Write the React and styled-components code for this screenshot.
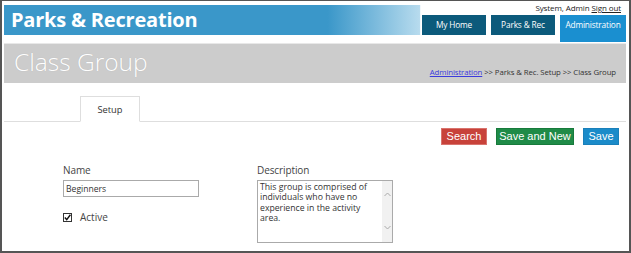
import React from "react";
import styled, { createGlobalStyle } from "styled-components";

const GlobalStyle = createGlobalStyle`
  html, body { margin: 0; padding: 0; background: #fff; }
  body { font-family: "Open Sans", "Noto Sans", sans-serif; color: #333; }
`;

const Frame = styled.div`
  box-sizing: border-box;
  width: 631px;
  height: 253px;
  border: 2px solid #555;
  border-top-width: 1px;
  padding: 4px 3px 0 2px;
  display: flex;
  flex-direction: column;
  overflow: hidden;
`;

const Header = styled.header`
  height: 30px;
  display: flex;
  justify-content: space-between;
  background: linear-gradient(
    to right,
    #3a97c9 0%,
    #3a97c9 52%,
    #b7dbee 66.8%,
    #fff 67%
  );
`;

const AppTitle = styled.h1`
  margin: 0;
  padding-left: 7px;
  font-size: 20px;
  font-weight: 700;
  line-height: 30px;
  color: #fff;
  letter-spacing: -0.2px;
`;

const UserArea = styled.div`
  display: flex;
  flex-direction: column;
  align-items: flex-end;
`;

const UserLine = styled.div`
  margin-top: -2px;
  padding-right: 5px;
  font-size: 8px;
  line-height: 10px;
  letter-spacing: -0.1px;
  color: #222;

  a {
    color: #222;
    text-decoration: underline;
  }
`;

const NavTabs = styled.nav`
  margin-top: 2px;
  display: flex;
  align-items: flex-start;
  gap: 5px;
`;

const NavTab = styled.a`
  display: flex;
  align-items: flex-start;
  justify-content: center;
  box-sizing: border-box;
  width: ${(p) => (p.$active ? "66px" : "64px")};
  height: ${(p) => (p.$active ? "27px" : "20px")};
  padding-top: 4px;
  font-size: 8.3px;
  line-height: 12px;
  letter-spacing: -0.15px;
  color: #fff;
  text-decoration: none;
  background: ${(p) => (p.$active ? "#1a8fd0" : "#0c5a7b")};
`;

const Banner = styled.div`
  margin-top: 8px;
  border-top: 1px solid #e8e8e8;
  height: 39px;
  background: #cccccc;
  display: flex;
  justify-content: space-between;
`;

const PageTitle = styled.h2`
  margin: 0;
  padding-left: 10px;
  font-size: 24.5px;
  font-weight: 300;
  line-height: 36px;
  color: #fff;
  text-shadow: 0 0 1px rgba(0, 0, 0, 0.15);
`;

const Breadcrumb = styled.div`
  align-self: flex-end;
  margin-bottom: 5px;
  padding-right: 10px;
  font-size: 7.8px;
  line-height: 11px;
  letter-spacing: -0.1px;
  color: #333;

  a {
    color: #3b3bdd;
    text-decoration: underline;
  }
`;

const TabBar = styled.div`
  margin-top: 13px;
  display: flex;
  border-bottom: 1px solid #dedede;
  padding-left: 76px;
`;

const Tab = styled.div`
  box-sizing: border-box;
  width: 60px;
  height: 26px;
  margin-bottom: -1px;
  border: 1px solid #dedede;
  border-bottom: 1px solid #fff;
  background: #fff;
  display: flex;
  align-items: center;
  justify-content: center;
  font-size: 9.3px;
  color: #333;
`;

const Toolbar = styled.div`
  margin-top: 6px;
  display: flex;
  justify-content: flex-end;
  gap: 9px;
  padding-right: 7px;
`;

const ActionButton = styled.button`
  box-sizing: border-box;
  width: ${(p) => p.$width}px;
  height: 17px;
  padding: 0;
  border: 1px solid ${(p) => p.$border};
  background: ${(p) => p.$bg};
  color: #fff;
  font-family: "Liberation Sans", Arial, sans-serif;
  font-size: 11px;
  line-height: 15px;
  cursor: pointer;
`;

const Form = styled.form`
  margin-top: 18px;
  padding-left: 59px;
  display: flex;
  gap: 58px;
`;

const Field = styled.div`
  display: flex;
  flex-direction: column;
  width: 136px;
`;

const Label = styled.label`
  font-size: 10px;
  line-height: 14px;
  letter-spacing: -0.1px;
  color: #444;
  margin-bottom: 3px;
`;

const TextInput = styled.input`
  box-sizing: border-box;
  width: 136px;
  height: 17px;
  border: 1px solid #aaa;
  padding: 0 2px;
  font-family: inherit;
  font-size: 8.6px;
  color: #333;
  outline: none;
`;

const CheckRow = styled.label`
  margin-top: 13px;
  display: flex;
  align-items: center;
  gap: 8px;
  font-size: 10px;
  color: #444;
`;

const CheckBox = styled.span`
  box-sizing: border-box;
  width: 9px;
  height: 9px;
  border: 1px solid #333;
  display: flex;
  align-items: center;
  justify-content: center;
`;

const TextBox = styled.div`
  box-sizing: border-box;
  width: 136px;
  height: 63px;
  border: 1px solid #aaa;
  display: flex;
`;

const TextArea = styled.textarea`
  flex: 1;
  border: none;
  resize: none;
  overflow: hidden;
  padding: 1px 2px;
  margin: 0;
  font-family: inherit;
  font-size: 8.7px;
  line-height: 10.4px;
  color: #333;
  outline: none;
`;

const ScrollGutter = styled.div`
  width: 10px;
  background: #f1f1f1;
  display: flex;
  flex-direction: column;
  justify-content: space-between;
  align-items: center;
  padding: 11px 0 12px;
`;

const Chevron = ({ down }) => (
  <svg width="7" height="5" viewBox="0 0 7 5">
    <polyline
      points={down ? "0.5,1 3.5,4 6.5,1" : "0.5,4 3.5,1 6.5,4"}
      fill="none"
      stroke="#aaa"
      strokeWidth="1"
    />
  </svg>
);

export default function App() {
  return (
    <>
      <GlobalStyle />
      <Frame>
        <Header>
          <AppTitle>Parks &amp; Recreation</AppTitle>
          <UserArea>
            <UserLine>
              System, Admin <a href="#">Sign out</a>
            </UserLine>
            <NavTabs>
              <NavTab href="#">My Home</NavTab>
              <NavTab href="#">Parks &amp; Rec</NavTab>
              <NavTab href="#" $active>
                Administration
              </NavTab>
            </NavTabs>
          </UserArea>
        </Header>

        <Banner>
          <PageTitle>Class Group</PageTitle>
          <Breadcrumb>
            <a href="#">Administration</a> &gt;&gt; Parks &amp; Rec. Setup &gt;&gt; Class Group
          </Breadcrumb>
        </Banner>

        <TabBar>
          <Tab>Setup</Tab>
        </TabBar>

        <Toolbar>
          <ActionButton type="button" $width={46} $bg="#c8423a" $border="#d8736d">
            Search
          </ActionButton>
          <ActionButton type="button" $width={78} $bg="#1f8b47" $border="#177a3b">
            Save and New
          </ActionButton>
          <ActionButton type="button" $width={36} $bg="#1b8bc9" $border="#1a80ba">
            Save
          </ActionButton>
        </Toolbar>

        <Form>
          <Field>
            <Label>Name</Label>
            <TextInput defaultValue="Beginners" />
            <CheckRow>
              <CheckBox>
                <svg width="7" height="7" viewBox="0 0 7 7">
                  <polyline
                    points="0.8,3.6 2.7,5.6 6.4,0.8"
                    fill="none"
                    stroke="#111"
                    strokeWidth="1.4"
                  />
                </svg>
              </CheckBox>
              Active
            </CheckRow>
          </Field>
          <Field>
            <Label>Description</Label>
            <TextBox>
              <TextArea defaultValue="This group is comprised of individuals who have no experience in the activity area." />
              <ScrollGutter>
                <Chevron />
                <Chevron down />
              </ScrollGutter>
            </TextBox>
          </Field>
        </Form>
      </Frame>
    </>
  );
}
